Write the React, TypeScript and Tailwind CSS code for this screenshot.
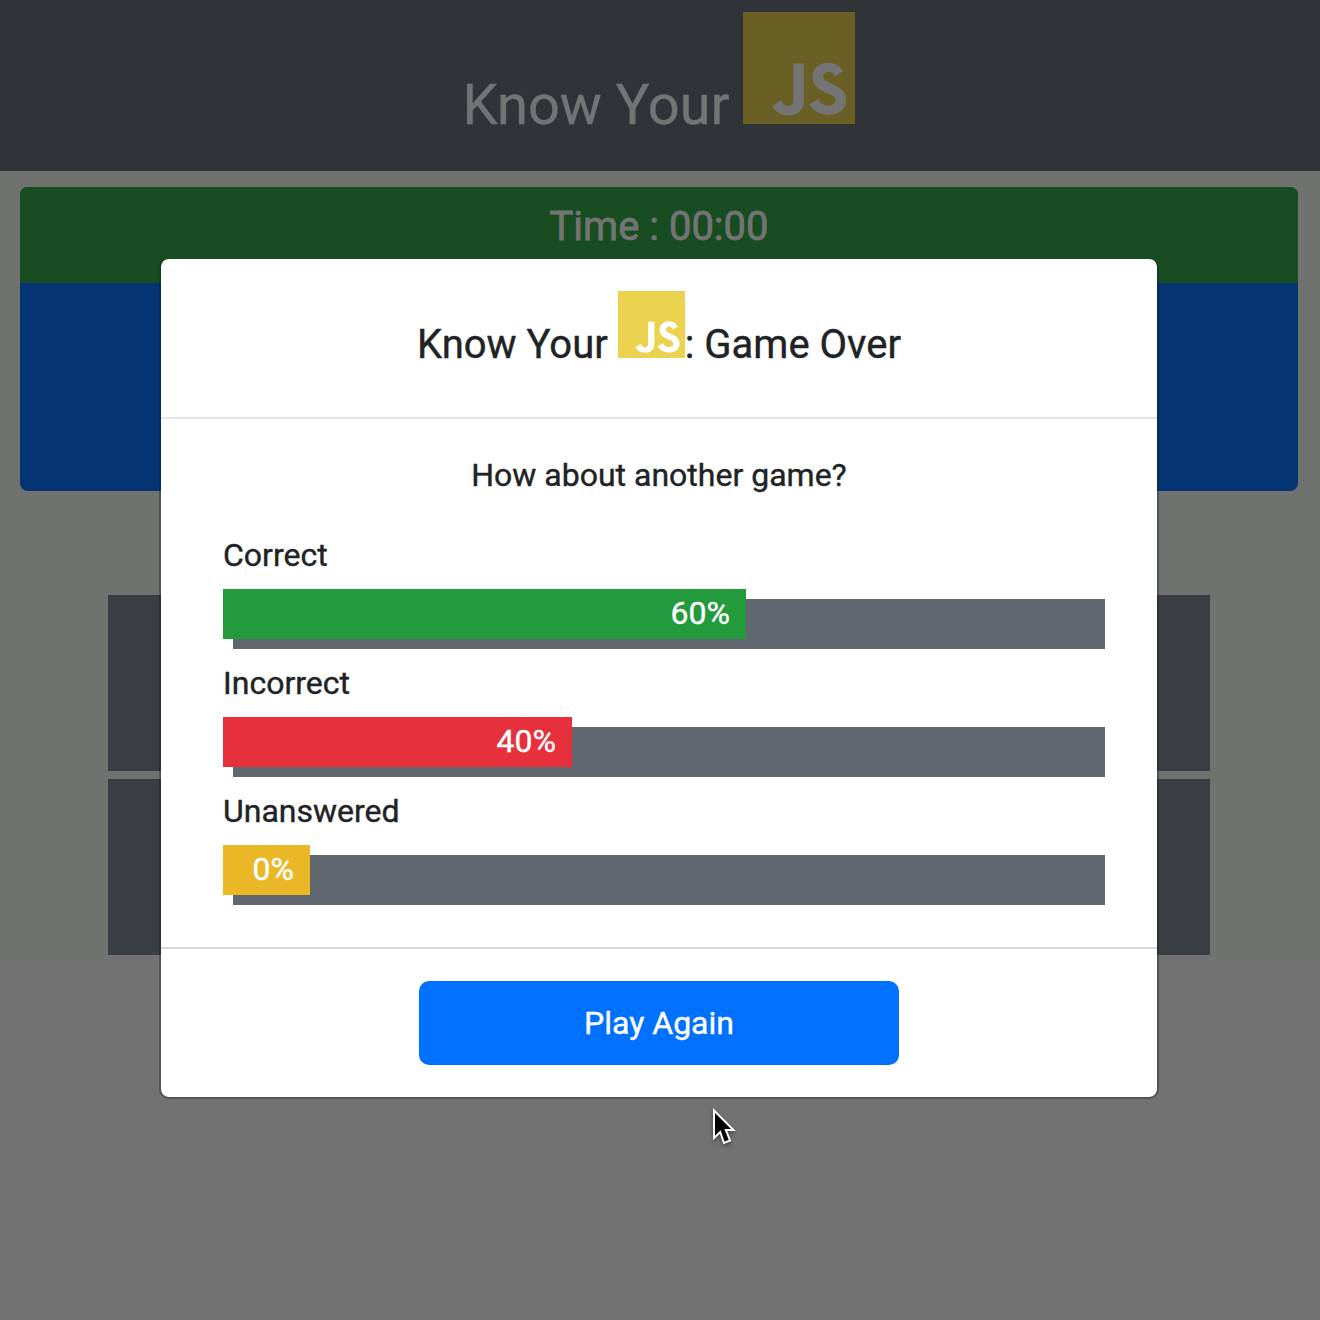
import React from "react";
import { SiJavascript } from "react-icons/si";

const results = [
  { label: "Correct", value: "60%", bar: "w-[523px] bg-[#239a3b]" },
  { label: "Incorrect", value: "40%", bar: "w-[349px] bg-[#e6303b]" },
  { label: "Unanswered", value: "0%", bar: "w-[87px] bg-[#eab827]" },
];

function Logo({ className }: { className: string }) {
  return (
    <span className={`inline-block shrink-0 ${className}`}>
      <SiJavascript className="block h-full w-full" />
    </span>
  );
}

function Page() {
  return (
    <div className="h-[955px] bg-[#6f726f]">
      <header className="flex h-[171px] items-start justify-center bg-[#303338] pt-3 pr-0.5 text-[#747474]">
        <h1 className="flex h-28 items-start text-[56px] leading-[76px]">
          <span className="mt-[55px] mr-[14px] whitespace-nowrap">Know Your</span>
          <Logo className="h-28 w-28 bg-[#747474] text-[#6a6026]" />
        </h1>
      </header>
      <section className="mt-4 mr-[22px] ml-5 h-[304px] overflow-hidden rounded-lg bg-[#043474]">
        <div className="h-24 bg-[#174d20] pt-4 text-center text-[40px] leading-[48px] text-[#747474] [-webkit-text-stroke:0.8px_#747474]">
          Time : 00:00
        </div>
      </section>
      <section className="mt-[104px] mr-[110px] ml-[108px] flex flex-col gap-2">
        <div className="h-44 bg-[#3a3d41]" />
        <div className="h-44 bg-[#3a3d41]" />
      </section>
    </div>
  );
}

function GameOverDialog() {
  return (
    <div
      role="dialog"
      className="absolute top-[257px] left-[159px] flex h-[842px] w-[1000px] flex-col rounded-[10px] border-2 border-[#141e2d]/35 border-t-transparent bg-white bg-clip-padding text-[#202325]"
    >
      <div className="flex h-40 shrink-0 items-start justify-center border-b-2 border-[#e5e5e5] pt-8">
        <h2 className="flex h-[67px] items-start text-[40px] leading-[60px] whitespace-nowrap">
          <span className="mt-6 mr-[10px]">Know Your</span>
          <Logo className="h-[67px] w-[67px] bg-white text-[#ebd34f]" />
          <span className="mt-6">: Game Over</span>
        </h2>
      </div>
      <div className="flex h-[530px] shrink-0 flex-col border-b-2 border-[#dadada] pt-8 pl-[62px] text-[32px] leading-[48px]">
        <p className="mr-[62px] text-center">How about another game?</p>
        <div className="mt-8">
          {results.map((r) => (
            <div key={r.label} className="h-32">
              <div>{r.label}</div>
              <div className="relative mt-[20px] ml-[10px] h-[50px] w-[872px] bg-[#60676f]">
                <div className={`absolute -top-[10px] -left-[10px] h-[50px] pr-4 text-right text-white ${r.bar}`}>
                  {r.value}
                </div>
              </div>
            </div>
          ))}
        </div>
      </div>
      <div className="flex justify-center pt-8">
        <button className="h-[84px] w-[480px] rounded-[10px] bg-[#0070ff] text-[32px] leading-[48px] text-white [-webkit-text-stroke:inherit]">
          Play Again
        </button>
      </div>
    </div>
  );
}

export default function App() {
  return (
    <div className="relative h-[1320px] w-[1320px] overflow-hidden bg-[#727272] font-['Roboto',sans-serif] [-webkit-text-stroke:0.4px_currentColor]">
      <Page />
      <GameOverDialog />
      <svg
        className="absolute top-[1106px] left-[710px] drop-shadow-[0_2px_2px_rgba(0,0,0,0.4)]"
        width="28"
        height="42"
        viewBox="0 0 28 42"
      >
        <path
          d="M4 4.500V32l6.200-6L14 37l6-2.600L15.800 24H23.500Z"
          fill="#000"
          stroke="#fff"
          strokeWidth="2"
        />
      </svg>
    </div>
  );
}
